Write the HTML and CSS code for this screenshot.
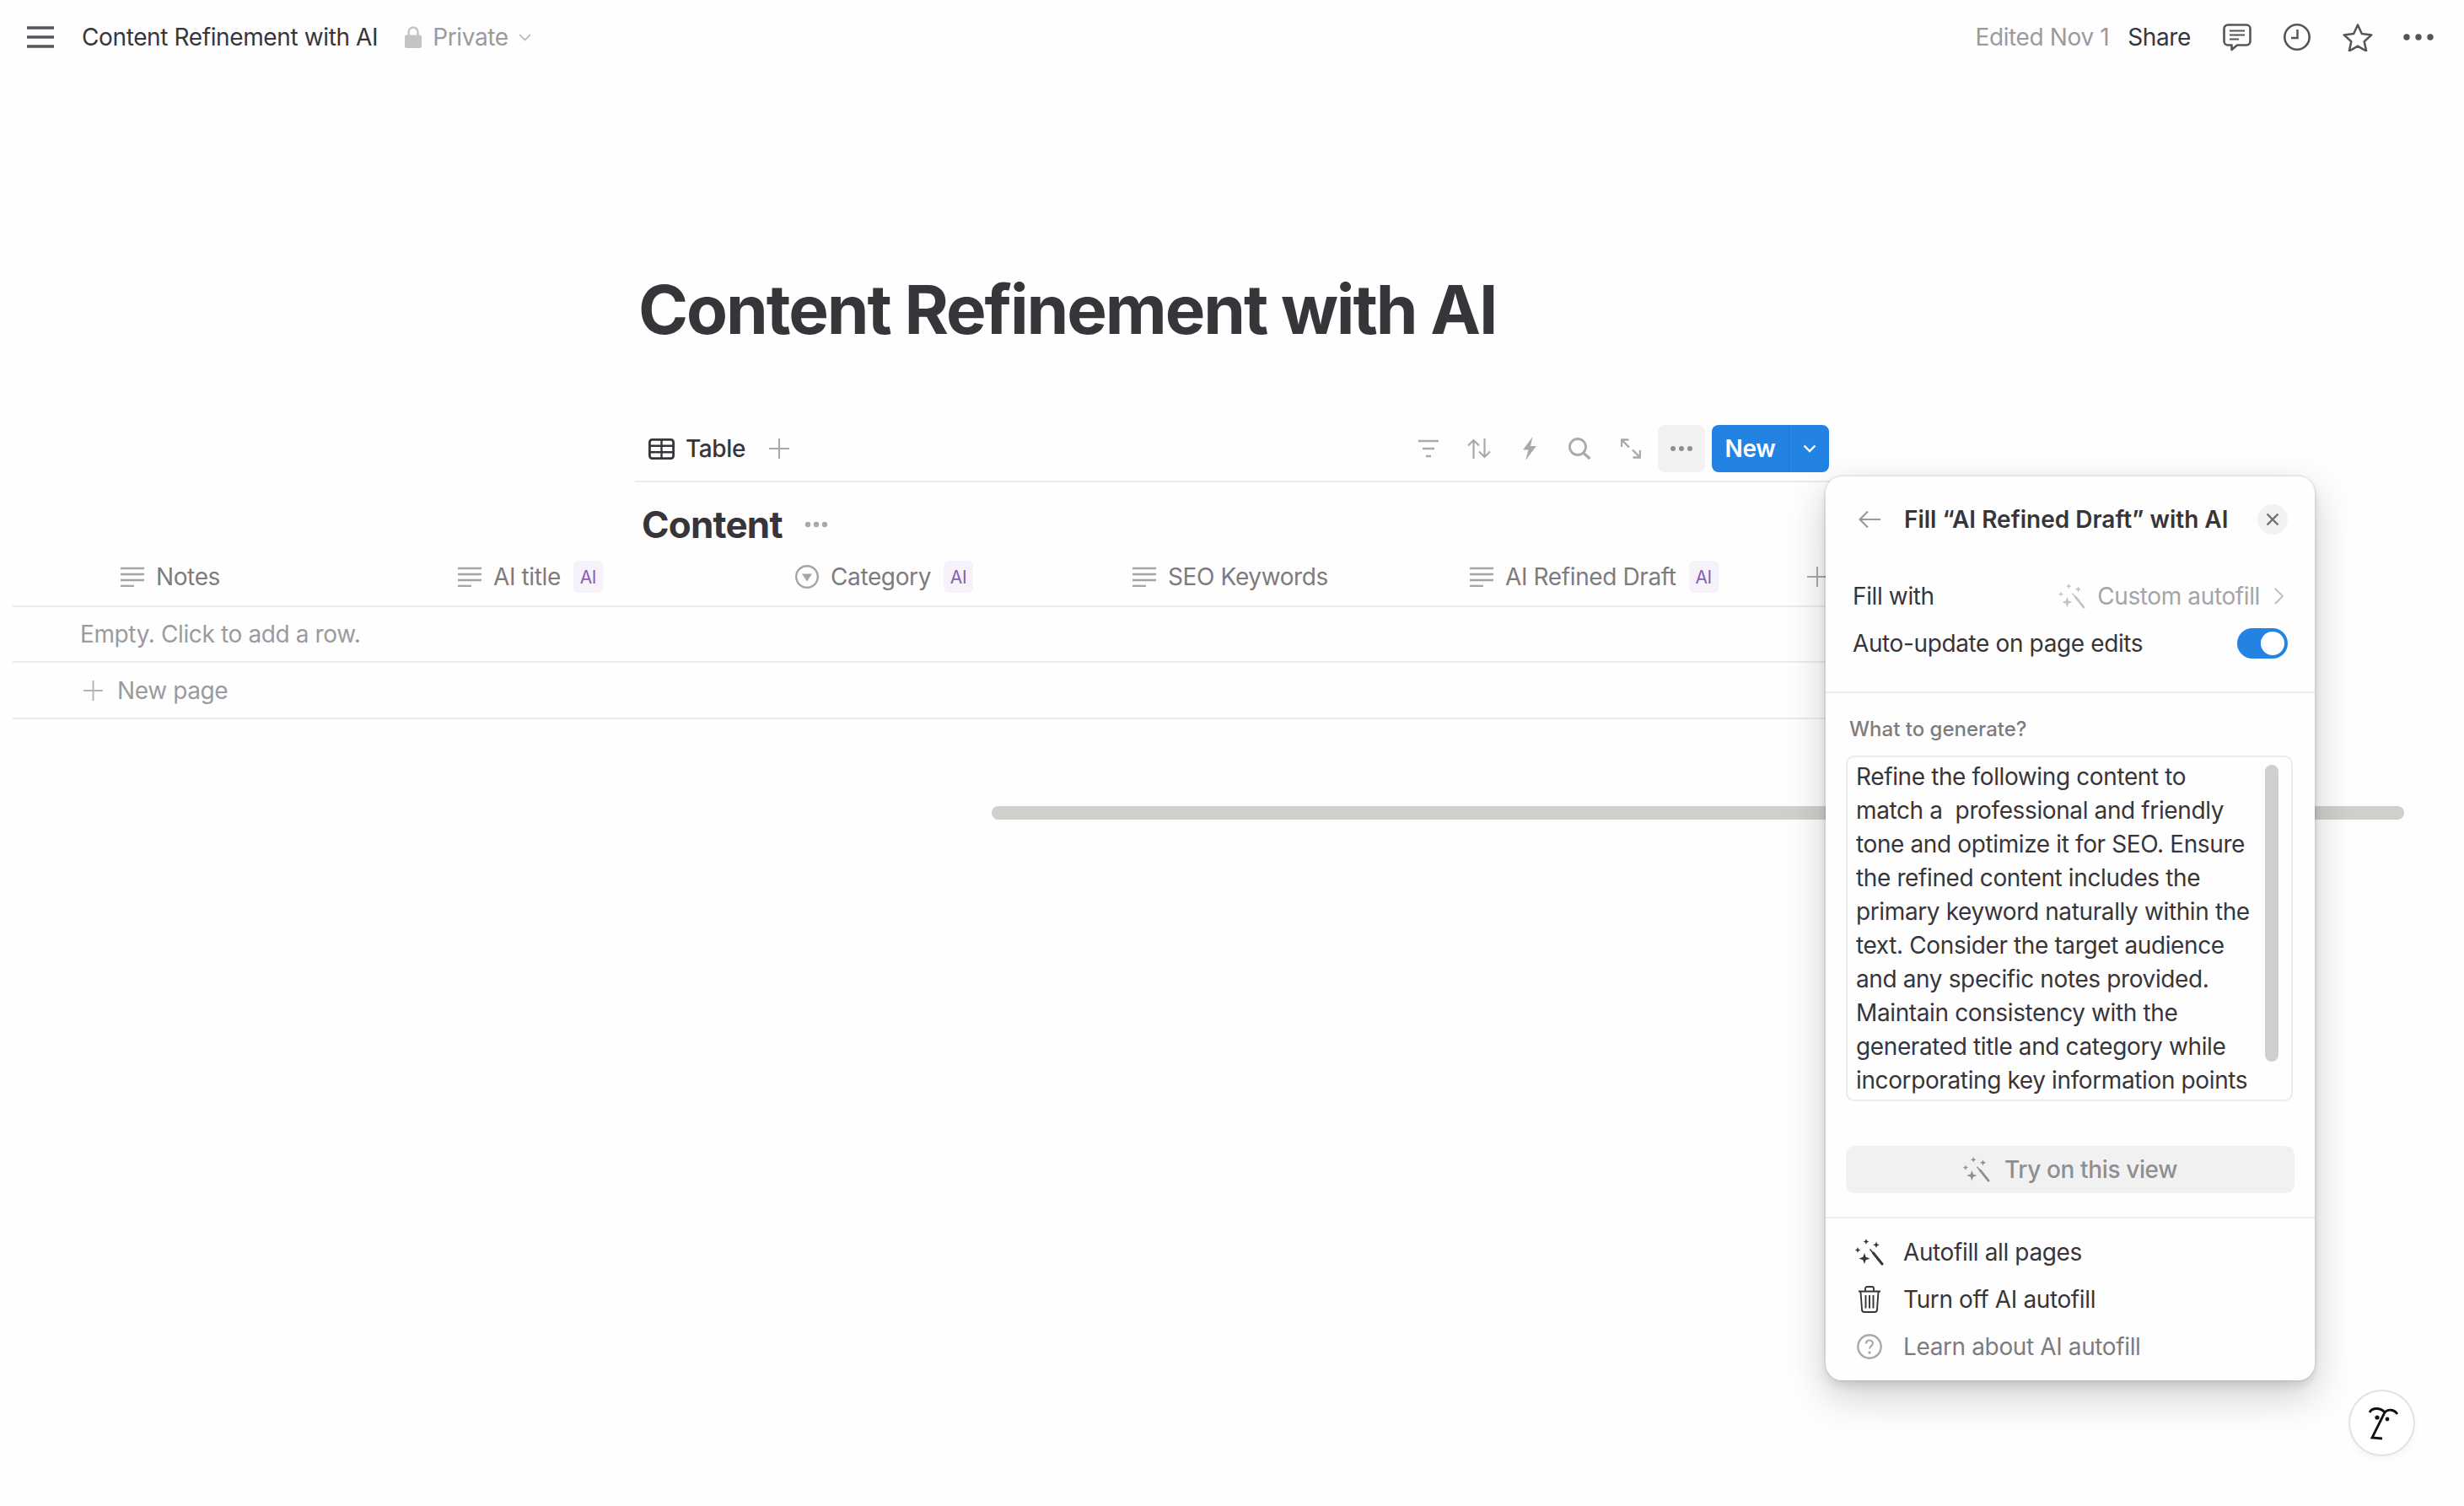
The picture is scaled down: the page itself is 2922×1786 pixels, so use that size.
FILE: index.html
```html
<!DOCTYPE html>
<html lang="en">

<head>
    <meta charset="UTF-8">
    <title>Content Refinement with AI</title>
    <link rel="stylesheet" href="styles.css">
</head>

<body>
    <svg class="sprites" width="0" height="0">
        <symbol id="i-lines" viewBox="0 0 28 24">
            <path d="M0 2h28M0 9h28M0 16h28M0 23h16" fill="none" stroke="currentColor" stroke-width="2.4" />
        </symbol>
        <symbol id="i-wand" viewBox="0 0 34 32">
            <path d="M13 0l1 2.4 2.4 1-2.4 1-1 2.4-1-2.4-2.4-1 2.4-1zM3 10l1 2.4 2.4 1-2.4 1-1 2.4-1-2.4L-.4 13.4l2.4-1zM25 3.500l1.100 2.700 2.700 1.100-2.700 1.100-1.100 2.700-1.100-2.700-2.700-1.100 2.700-1.100zM11 17l1.700 4.800 4.800 1.700-4.800 1.700L11 30l-1.700-4.800-4.800-1.700 4.800-1.700z" fill="currentColor" />
            <path d="M17.500 12.500l4.500 5.200" fill="none" stroke="currentColor" stroke-width="1.600" />
            <path d="M21.500 17l10.500 13" fill="none" stroke="currentColor" stroke-width="3" stroke-linecap="round" />
        </symbol>
    </svg>

    <div class="page">
        <header class="topbar">
            <svg class="ic-menu" width="32" height="26" viewBox="0 0 32 26">
                <path d="M0 2h32M0 13h32M0 24h32" fill="none" stroke="#55545a" stroke-width="3.600" />
            </svg>
            <span class="doc-name">Content Refinement with AI</span>
            <svg class="ic-lock" width="20" height="26" viewBox="0 0 20 26">
                <path d="M4.500 12V7a5.500 5.500 0 0 1 11 0v5" fill="none" stroke="#c4c3c5" stroke-width="2.400" />
                <rect y="10.500" width="20" height="15.500" rx="2" fill="#c4c3c5" />
            </svg>
            <span class="doc-private">Private</span>
            <svg class="ic-caret" width="15" height="9" viewBox="0 0 15 9">
                <path d="M1 1l6.500 6.500L14 1" fill="none" stroke="#bdbcbf" stroke-width="1.800" />
            </svg>

            <div class="topbar-right">
                <span class="edited">Edited Nov 1</span>
                <span class="share">Share</span>
                <svg class="ic-comment" width="34" height="33" viewBox="0 0 34 33">
                    <path d="M6 1.500h22a4.500 4.500 0 0 1 4.500 4.500v15a4.500 4.500 0 0 1-4.500 4.500H17L10.500 31v-5.500H6A4.500 4.500 0 0 1 1.500 21V6A4.500 4.500 0 0 1 6 1.500z" fill="none" stroke="#55545a" stroke-width="2.600" stroke-linejoin="round" />
                    <path d="M8 8.500h18M8 13.500h18M8 18.500h11" fill="none" stroke="#55545a" stroke-width="2" />
                </svg>
                <svg class="ic-clock" width="32" height="32" viewBox="0 0 32 32">
                    <circle cx="16" cy="16" r="14.700" fill="none" stroke="#55545a" stroke-width="2.600" />
                    <path d="M16.500 7v10H9" fill="none" stroke="#55545a" stroke-width="2.400" />
                </svg>
                <svg class="ic-star" width="36" height="34" viewBox="0 0 36 34">
                    <path d="M18 2.500l4.800 10.600 11.500 1.300-8.600 7.800 2.400 11.300L18 27.700 7.900 33.500l2.400-11.300-8.600-7.800 11.500-1.300z" fill="none" stroke="#55545a" stroke-width="2.500" stroke-linejoin="round" />
                </svg>
                <svg class="ic-more" width="36" height="8" viewBox="0 0 36 8">
                    <circle cx="4" cy="4" r="3.700" fill="#55545a" />
                    <circle cx="18" cy="4" r="3.700" fill="#55545a" />
                    <circle cx="32" cy="4" r="3.700" fill="#55545a" />
                </svg>
            </div>
        </header>

        <h1 class="title">Content Refinement with AI</h1>

        <div class="views">
            <svg class="ic-table" width="31" height="25" viewBox="0 0 31 25">
                <rect x="1.400" y="1.400" width="28.200" height="22.200" rx="3" fill="none" stroke="#37353a" stroke-width="2.800" />
                <path d="M1 8.700h29M1 16.200h29M15.500 1v23" fill="none" stroke="#37353a" stroke-width="2.400" />
            </svg>
            <span class="view-name">Table</span>
            <svg class="ic-plus-view" width="24" height="24" viewBox="0 0 24 24">
                <path d="M12 0v24M0 12h24" fill="none" stroke="#a9a8ab" stroke-width="2" />
            </svg>

            <div class="view-tools">
                <svg width="24" height="22" viewBox="0 0 24 22">
                    <path d="M0 2h24M5 11h14M9 20h6" fill="none" stroke="#a9a8ab" stroke-width="2.600" />
                </svg>
                <svg class="tool-sort" width="28" height="24" viewBox="0 0 28 24">
                    <path d="M7.500 24V2M1 8.500l6.500-6.500L14 8.500M20.500 0v22M14 15.500l6.500 6.500 6.500-6.500" fill="none" stroke="#a9a8ab" stroke-width="2.200" />
                </svg>
                <svg class="tool-bolt" width="18" height="28" viewBox="0 0 18 28">
                    <path d="M12.500 0L1 15.500h6.500L4 28l13-17h-7z" fill="#a9a8ab" />
                </svg>
                <svg class="tool-search" width="27" height="26" viewBox="0 0 27 26">
                    <circle cx="11" cy="11" r="9.500" fill="none" stroke="#a9a8ab" stroke-width="2.800" />
                    <path d="M17.500 18l8 7" fill="none" stroke="#a9a8ab" stroke-width="3.200" />
                </svg>
                <svg class="tool-expand" width="24" height="24" viewBox="0 0 24 24">
                    <path d="M1 10V1.500h8.500M1.500 2L10 10.500M23 14v8.500h-8.500M22.500 22L14 13.500" fill="none" stroke="#a9a8ab" stroke-width="2.400" />
                </svg>
                <span class="tool-more">
                    <svg width="28" height="8" viewBox="0 0 28 8">
                        <circle cx="4" cy="4" r="3" fill="#8f8e92" />
                        <circle cx="14" cy="4" r="3" fill="#8f8e92" />
                        <circle cx="24" cy="4" r="3" fill="#8f8e92" />
                    </svg>
                </span>
                <div class="btn-new">
                    <span class="btn-new-label">New</span>
                    <span class="btn-new-caret">
                        <svg width="16" height="10" viewBox="0 0 16 10">
                            <path d="M1.500 1.500L8 8l6.500-6.500" fill="none" stroke="#fff" stroke-width="2.400" />
                        </svg>
                    </span>
                </div>
            </div>
        </div>

        <div class="db-head">
            <h2 class="db-title">Content</h2>
            <svg width="28" height="8" viewBox="0 0 28 8">
                <circle cx="4" cy="4" r="3.200" fill="#a9a8ab" />
                <circle cx="14" cy="4" r="3.200" fill="#a9a8ab" />
                <circle cx="24" cy="4" r="3.200" fill="#a9a8ab" />
            </svg>
        </div>

        <div class="table">
            <div class="row row-head">
                <div class="col">
                    <svg class="ic-col"><use href="#i-lines" /></svg>
                    <span>Notes</span>
                </div>
                <div class="col">
                    <svg class="ic-col"><use href="#i-lines" /></svg>
                    <span>AI title</span>
                    <span class="ai-tag">AI</span>
                </div>
                <div class="col">
                    <svg class="ic-col ic-col-round" viewBox="0 0 28 28">
                        <circle cx="14" cy="14" r="12.800" fill="none" stroke="currentColor" stroke-width="2.400" />
                        <path d="M8 10.500h12l-6 9z" fill="currentColor" />
                    </svg>
                    <span>Category</span>
                    <span class="ai-tag">AI</span>
                </div>
                <div class="col">
                    <svg class="ic-col"><use href="#i-lines" /></svg>
                    <span>SEO Keywords</span>
                </div>
                <div class="col">
                    <svg class="ic-col"><use href="#i-lines" /></svg>
                    <span>AI Refined Draft</span>
                    <span class="ai-tag">AI</span>
                </div>
                <svg class="ic-plus-col" width="24" height="24" viewBox="0 0 24 24">
                    <path d="M12 0v24M0 12h24" fill="none" stroke="#a9a8ab" stroke-width="2" />
                </svg>
            </div>
            <div class="row row-empty">Empty. Click to add a row.</div>
            <div class="row row-new">
                <svg width="23" height="24" viewBox="0 0 23 24">
                    <path d="M11.500 0v24M0 12h23" fill="none" stroke="#b3b2b5" stroke-width="2" />
                </svg>
                <span>New page</span>
            </div>
        </div>

        <div class="hscroll"></div>

        <!-- autofill popup -->
        <aside class="popup">
            <div class="pop-head">
                <svg class="ic-back" width="26" height="22" viewBox="0 0 26 22">
                    <path d="M26 11H2M11 1.500L1.500 11l9.500 9.500" fill="none" stroke="#9a999c" stroke-width="2.200" />
                </svg>
                <span class="pop-title">Fill “AI Refined Draft” with AI</span>
                <span class="pop-close">
                    <svg width="16" height="16" viewBox="0 0 16 16">
                        <path d="M1.500 1.500l13 13M14.500 1.500l-13 13" fill="none" stroke="#6f6e72" stroke-width="2.400" />
                    </svg>
                </span>
            </div>

            <div class="pop-settings">
                <div class="pop-row">
                    <span>Fill with</span>
                    <div class="pop-value">
                        <svg class="ic-wand ic-wand-faint"><use href="#i-wand" /></svg>
                        <span>Custom autofill</span>
                        <svg width="11" height="20" viewBox="0 0 11 20">
                            <path d="M1 1l9 9-9 9" fill="none" stroke="#bdbcbf" stroke-width="1.800" />
                        </svg>
                    </div>
                </div>
                <div class="pop-row">
                    <span>Auto-update on page edits</span>
                    <span class="toggle"><span class="toggle-knob"></span></span>
                </div>
            </div>

            <div class="pop-gen">
                <div class="gen-label">What to generate?</div>
                <div class="gen-box">
                    <div class="gen-text">Refine the following content to match a  professional and friendly tone and optimize it for SEO. Ensure the refined content includes the primary keyword naturally within the text. Consider the target audience and any specific notes provided. Maintain consistency with the generated title and category while incorporating key information points</div>
                    <span class="gen-thumb"></span>
                </div>
                <div class="btn-try">
                    <svg class="ic-wand"><use href="#i-wand" /></svg>
                    <span>Try on this view</span>
                </div>
            </div>

            <div class="pop-menu">
                <div class="menu-item">
                    <svg class="menu-ic"><use href="#i-wand" /></svg>
                    <span>Autofill all pages</span>
                </div>
                <div class="menu-item">
                    <svg class="menu-ic" viewBox="0 0 34 32">
                        <path d="M4 6.500h26M12 6V3a2 2 0 0 1 2-2h6a2 2 0 0 1 2 2v3M6.500 7l1.500 21a3 3 0 0 0 3 3h12a3 3 0 0 0 3-3l1.500-21M12.500 11v15.500M17 11v15.500M21.500 11v15.500" fill="none" stroke="currentColor" stroke-width="1.900" />
                    </svg>
                    <span>Turn off AI autofill</span>
                </div>
                <div class="menu-item menu-item-muted">
                    <svg class="menu-ic" viewBox="0 0 34 32">
                        <circle cx="17" cy="16" r="13.700" fill="none" stroke="#a9a8ab" stroke-width="2.400" />
                        <path d="M13 12.500c0-2.600 1.800-4 4-4s4 1.500 4 3.600c0 3-4 3-4 6.400" fill="none" stroke="#a9a8ab" stroke-width="2.200" />
                        <circle cx="17" cy="23" r="1.700" fill="#a9a8ab" />
                    </svg>
                    <span>Learn about AI autofill</span>
                </div>
            </div>
        </aside>

        <div class="ai-fab">
            <svg width="75" height="75" viewBox="0 0 75 75">
                <path d="M23 25c3-6 13-6 18 0M41 25c4-4 11-4 15 2M41 25L26 55l12 1" fill="none" stroke="#111" stroke-width="2.800" stroke-linejoin="miter" />
                <circle cx="32" cy="31" r="2.600" fill="#111" />
                <circle cx="44" cy="33" r="2.400" fill="#111" />
            </svg>
        </div>
    </div>
</body>

</html>
```

FILE: styles.css
```css
* {
    box-sizing: border-box;
}

body {
    margin: 0;
    background: #fffefe;
    color: #37353a;
    font-family: Inter, "Noto Sans", sans-serif;
    font-size: 28px;
    letter-spacing: -0.38px;
}

.sprites {
    position: absolute;
}

.page {
    position: relative;
    width: 2922px;
    height: 1786px;
    overflow: hidden;
}

/* top bar */

.topbar {
    display: flex;
    align-items: center;
    height: 88px;
    padding: 0 36px 0 32px;
}

.doc-name {
    margin-left: 33px;
}

.ic-lock {
    margin-left: 32px;
}

.doc-private {
    margin-left: 13px;
    color: #9b9a9e;
}

.ic-caret {
    margin-left: 12px;
}

.topbar-right {
    display: flex;
    align-items: center;
    margin-left: auto;
}

.edited {
    color: #9b9a9e;
}

.share {
    margin-left: 22px;
}

.ic-comment {
    margin-left: 38px;
}

.ic-clock {
    margin-left: 38px;
}

.ic-star {
    margin-left: 38px;
}

.ic-more {
    margin-left: 36px;
}

/* title */

.title {
    margin: 231px 0 0 757px;
    font-size: 80px;
    line-height: 96px;
    font-weight: 700;
    letter-spacing: -2.1px;
}

/* views toolbar */

.views {
    display: flex;
    align-items: center;
    width: 1417px;
    height: 68px;
    margin: 89px 0 0 753px;
    padding: 0 0 10px 16px;
    border-bottom: 2px solid #ecebeb;
}

.view-name {
    margin-left: 13px;
    font-weight: 500;
}

.ic-plus-view {
    margin-left: 28px;
}

.view-tools {
    display: flex;
    align-items: center;
    margin-left: auto;
    margin-right: 1px;
}

.tool-sort {
    margin-left: 34px;
}

.tool-bolt {
    margin-left: 37px;
}

.tool-search {
    margin-left: 37px;
}

.tool-expand {
    margin-left: 35px;
}

.tool-more {
    display: flex;
    align-items: center;
    justify-content: center;
    width: 56px;
    height: 56px;
    margin-left: 20px;
    background: #f3f2f3;
    border-radius: 8px;
}

.btn-new {
    display: flex;
    width: 139px;
    height: 56px;
    margin-left: 8px;
    background: #2383e2;
    border-radius: 8px;
    color: #fff;
    font-weight: 600;
}

.btn-new-label {
    display: flex;
    align-items: center;
    justify-content: center;
    width: 92px;
    border-right: 1px solid #1c74cc;
}

.btn-new-caret {
    display: flex;
    align-items: center;
    justify-content: center;
    flex: 1;
}

/* database */

.db-head {
    display: flex;
    align-items: center;
    gap: 26px;
    margin: 22px 0 0 761px;
    height: 56px;
}

.db-title {
    margin: 0;
    font-size: 44px;
    line-height: 56px;
    font-weight: 700;
    letter-spacing: -0.8px;
}

.table {
    width: 2200px;
    margin-left: 15px;
}

.row {
    display: flex;
    align-items: center;
    height: 66px;
    border-bottom: 2px solid #ecebeb;
}

.row-head {
    height: 70px;
    padding-left: 128px;
    color: #7d7b80;
}

.col {
    display: flex;
    align-items: center;
    width: 400px;
}

.ic-col {
    width: 28px;
    height: 24px;
    margin-right: 14px;
    color: #a5a4a7;
}

.ic-col-round {
    height: 28px;
}

.ai-tag {
    display: flex;
    align-items: center;
    justify-content: center;
    width: 35px;
    height: 38px;
    margin-left: 15px;
    background: #f7f2fa;
    border-radius: 6px;
    color: #8a5db3;
    font-size: 21px;
}

.row-empty {
    padding-left: 80px;
    color: #9b9a9e;
}

.row-new {
    height: 67px;
    padding-left: 84px;
    color: #9b9a9e;
}

.row-new span {
    margin-left: 17px;
}

.hscroll {
    width: 1675px;
    height: 16px;
    margin: 103px 0 0 1176px;
    background: #d0cfcc;
    border-radius: 8px;
}

/* popup */

.popup {
    position: absolute;
    left: 2165px;
    top: 565px;
    width: 580px;
    height: 1072px;
    background: #fffefe;
    border-radius: 20px;
    box-shadow: 0 0 0 2px rgba(15, 15, 15, 0.05), 0 6px 12px rgba(15, 15, 15, 0.1), 0 18px 48px rgba(15, 15, 15, 0.2);
}

.pop-head {
    display: flex;
    align-items: center;
    height: 102px;
    padding: 0 32px 0 39px;
}

.pop-title {
    margin-left: 28px;
    font-weight: 600;
    letter-spacing: 0;
}

.pop-close {
    display: flex;
    align-items: center;
    justify-content: center;
    width: 36px;
    height: 36px;
    margin-left: auto;
    background: #f3f2f3;
    border-radius: 50%;
}

.pop-settings {
    padding: 12px 32px 29px 32px;
    border-bottom: 2px solid #eeeded;
}

.pop-row {
    display: flex;
    align-items: center;
    justify-content: space-between;
    height: 56px;
}

.pop-value {
    display: flex;
    align-items: center;
    color: #a5a4a7;
}

.pop-value span {
    margin: 0 17px 0 14px;
}

.pop-value svg:last-child {
    margin-right: 5px;
}

.ic-wand {
    width: 32px;
    height: 30px;
    color: #8f8e92;
}

.ic-wand-faint {
    color: #c4c3c5;
}

.toggle {
    display: flex;
    justify-content: flex-end;
    align-items: center;
    width: 60px;
    height: 36px;
    padding-right: 4px;
    background: #2383e2;
    border-radius: 18px;
}

.toggle-knob {
    width: 28px;
    height: 28px;
    background: #fff;
    border-radius: 50%;
}

.pop-gen {
    padding: 27px 24px 28px 24px;
    border-bottom: 2px solid #eeeded;
}

.gen-label {
    margin-left: 4px;
    font-size: 24px;
    line-height: 32px;
    font-weight: 500;
    color: #7d7b80;
    letter-spacing: 0;
}

.gen-box {
    position: relative;
    width: 530px;
    height: 410px;
    margin: 15px 0 0 0;
    padding: 3px 0 0 10px;
    border: 2px solid #ecebeb;
    border-radius: 10px;
    overflow: hidden;
}

.gen-text {
    width: 472px;
    line-height: 40px;
    white-space: pre-wrap;
}

.gen-thumb {
    position: absolute;
    left: 495px;
    top: 9px;
    width: 16px;
    height: 352px;
    background: #d0cfcf;
    border-radius: 8px;
}

.btn-try {
    display: flex;
    align-items: center;
    justify-content: center;
    gap: 17px;
    width: 532px;
    height: 56px;
    margin-top: 53px;
    background: #f2f1f1;
    border-radius: 10px;
    color: #8f8e92;
    font-weight: 500;
}

.pop-menu {
    padding-top: 12px;
}

.menu-item {
    display: flex;
    align-items: center;
    height: 56px;
    padding-left: 35px;
}

.menu-ic {
    width: 34px;
    height: 32px;
    margin-right: 23px;
    color: #37353a;
}

.menu-item-muted {
    color: #7d7b80;
}

/* floating help button */

.ai-fab {
    position: absolute;
    left: 2787px;
    top: 1650px;
    width: 75px;
    height: 75px;
    background: #fff;
    border-radius: 50%;
    box-shadow: 0 0 0 2px #e3e2e2, 0 4px 10px rgba(15, 15, 15, 0.05);
}
```
